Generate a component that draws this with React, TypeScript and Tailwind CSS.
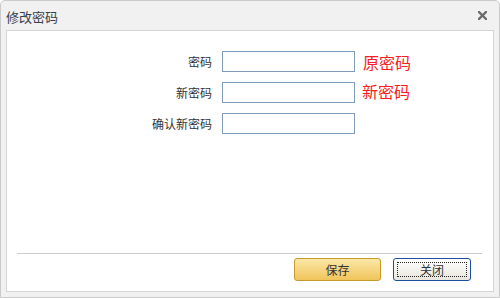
import * as React from "react";

const fields = [
  { label: "密码", note: "原密码", noteCls: "ml-[8px] text-[16px] leading-none text-[#f52020]" },
  { label: "新密码", note: "新密码", noteCls: "ml-[7px] mb-[4px] text-[16px] leading-none text-[#f52020]" },
  { label: "确认新密码", note: "", noteCls: "" },
];

const App = () => {
  return (
    <div className="w-[500px] h-[298px] flex flex-col bg-[#f1f1f1] border border-[#cacaca] rounded-t-[5px] px-[5px] pb-[5px] font-['Noto_Sans_CJK_SC',sans-serif]">
      {/* title bar */}
      <div className="h-[29px] shrink-0 flex items-center justify-between pr-[7px]">
        <span className="text-[13px] leading-none text-[#34404c] pt-[1px]">修改密码</span>
        <svg width="9" height="9" viewBox="0 0 9 9">
          <path d="M1 1L8 8M8 1L1 8" stroke="#6b6b6b" strokeWidth="2.4" strokeLinecap="square" />
        </svg>
      </div>

      {/* content */}
      <div className="flex-1 flex flex-col bg-white border border-[#d4d4d4]">
        <div className="flex flex-col gap-[10px] pt-[20px]">
          {fields.map((f) => (
            <div key={f.label} className="flex items-center h-[21px]">
              <div className="w-[215px] pr-[10px] text-right text-[12px] text-[#333] leading-none">
                {f.label}
              </div>
              <input
                type="text"
                className="w-[133px] h-[21px] border border-[#7f9db9] bg-white outline-none"
              />
              {f.note && <span className={f.noteCls}>{f.note}</span>}
            </div>
          ))}
        </div>

        {/* footer */}
        <div className="mt-auto ml-[10px] mr-[11px] border-t border-[#cccccc] pt-[4px] pb-[10px] flex justify-end gap-[12px] pr-[11px]">
          <button className="w-[87px] h-[23px] rounded-[3px] border border-[#c79a2c] bg-gradient-to-b from-[#fbe7a6] to-[#f0c45a] text-[12px] text-[#333] leading-none">
            保存
          </button>
          <button className="w-[78px] h-[23px] rounded-[3px] border border-[#1c4fa0] bg-gradient-to-b from-[#ffffff] to-[#e8e6dc] p-[3px]">
            <div className="w-full h-full border border-dotted border-[#222] flex items-center justify-center text-[12px] text-[#333] leading-none">
              关闭
            </div>
          </button>
        </div>
      </div>
    </div>
  );
};

export default App;
